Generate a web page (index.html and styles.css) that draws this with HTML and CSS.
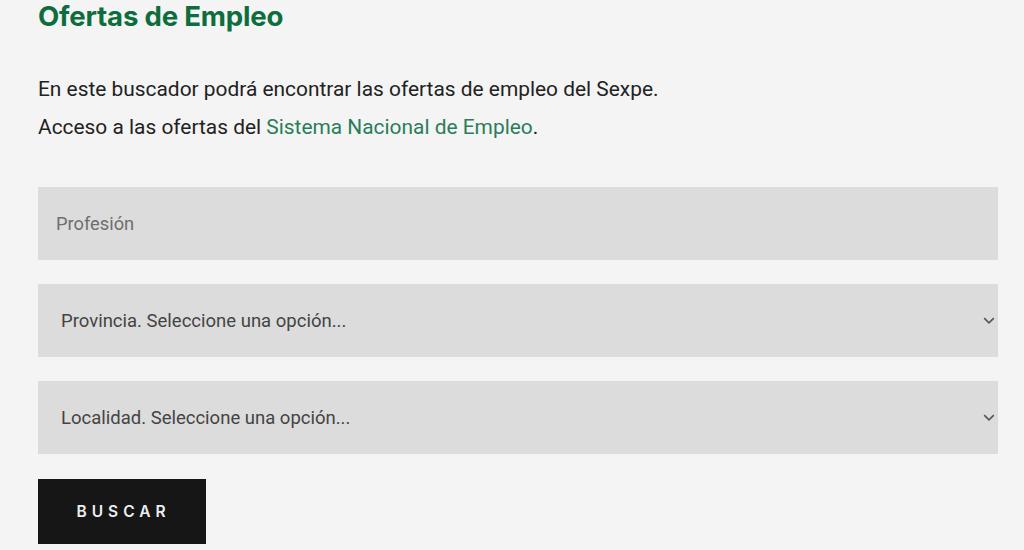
FILE: index.html
```html
<!DOCTYPE html>
<html lang="es">
<head>
<meta charset="utf-8">
<title>Ofertas de Empleo</title>
<link rel="stylesheet" href="styles.css">
</head>
<body>
<main class="page">
  <h1 class="title">Ofertas de Empleo</h1>
  <p class="intro">En este buscador podrá encontrar las ofertas de empleo del Sexpe.<br>Acceso a las ofertas del <a class="link" href="#">Sistema Nacional de Empleo</a>.</p>
  <form class="search">
    <input class="field" type="text" placeholder="Profesión">
    <div class="select-wrap">
      <select class="select"><option>Provincia. Seleccione una opción...</option></select>
      <svg class="chev" width="12" height="7" viewBox="0 0 12 7"><path d="M1.2 1.2l4.8 4.6 4.8-4.6" fill="none" stroke="#555" stroke-width="1.6"/></svg>
    </div>
    <div class="select-wrap">
      <select class="select"><option>Localidad. Seleccione una opción...</option></select>
      <svg class="chev" width="12" height="7" viewBox="0 0 12 7"><path d="M1.2 1.2l4.8 4.6 4.8-4.6" fill="none" stroke="#555" stroke-width="1.6"/></svg>
    </div>
    <button class="btn" type="button">BUSCAR</button>
  </form>
</main>
</body>
</html>
```
FILE: styles.css
```css
html, body { margin: 0; padding: 0; background: #f4f4f4; }
.page { width: 960px; padding: 0 0 0 38px; font-family: Roboto, "Liberation Sans", sans-serif; }
.title {
  margin: 0; padding-top: 1px;
  font-family: Inter, "Open Sans", sans-serif; font-weight: 700;
  font-size: 27.6px; line-height: 30px; color: #0d6d3c; letter-spacing: -0.2px;
}
.intro { margin: 39px 0 0; font-size: 20.9px; line-height: 38px; color: #222; }
.link { color: #2a7d5a; text-decoration: none; }
.search { display: flex; flex-direction: column; gap: 24px; margin-top: 41px; align-items: flex-start; }
.field {
  box-sizing: border-box; width: 960px; height: 73px; border: 0; margin: 0;
  background: #dcdcdc; padding: 0 18px; font-family: Roboto, sans-serif; font-size: 18.3px; color: #444; outline: none;
}
.field::placeholder { color: #6e6e6e; }
.select-wrap { display: flex; align-items: center; width: 960px; height: 73px; background: #dcdcdc; }
.select {
  flex: 1; height: 100%; appearance: none; -webkit-appearance: none; border: 0; background: transparent;
  padding: 0 0 0 23px; font-family: Roboto, sans-serif; font-size: 18.5px; color: #444; outline: none;
}
.chev { margin: 0 3px 0 0; }
.btn {
  width: 168px; height: 65px; margin-top: 1px; border: 0; background: #161616; color: #eee;
  font-family: Inter, "Open Sans", sans-serif; font-weight: 600; font-size: 15.5px; letter-spacing: 5px;
  padding: 0 0 0 3px;
}
```
